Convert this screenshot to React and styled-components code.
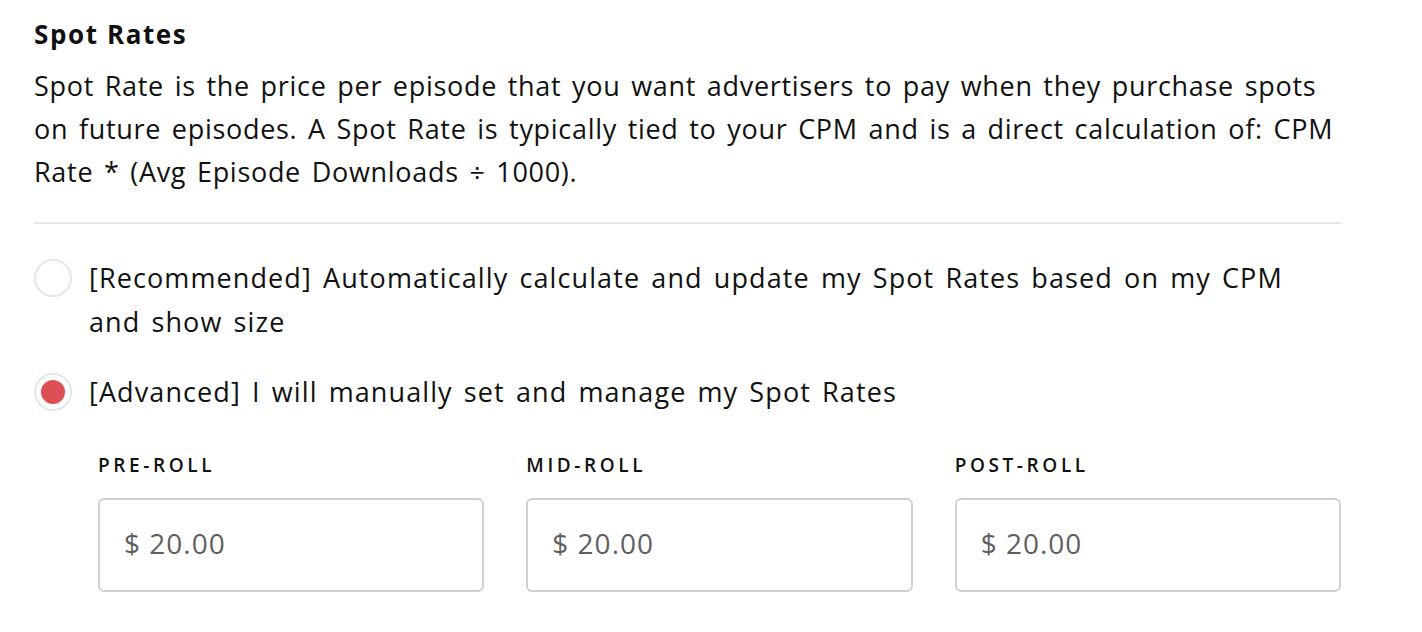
import React, { useState } from "react";
import styled, { createGlobalStyle } from "styled-components";

const GlobalStyle = createGlobalStyle`
  body {
    margin: 0;
    background: #ffffff;
    font-family: "Open Sans", "Liberation Sans", sans-serif;
    color: #111111;
  }
`

const Page = styled.div`
  padding: 16px 0 0 34px;
  width: 1307px;
`

const Title = styled.h2`
  margin: 0;
  font-size: 26px;
  font-weight: 700;
  line-height: 36px;
  letter-spacing: 1.6px;
`

const Description = styled.p`
  margin: 12px 0 0;
  font-size: 27px;
  line-height: 43px;
  font-weight: 400;
  letter-spacing: 0.7px;
  word-spacing: 3px;
  white-space: nowrap;
`

const Divider = styled.hr`
  border: none;
  border-top: 2px solid #e6e6e6;
  margin: 29px 0 0;
`

const Options = styled.div`
  display: flex;
  flex-direction: column;
  gap: 26px;
  margin-top: 32px;
`

const OptionRow = styled.label`
  display: flex;
  align-items: flex-start;
  gap: 17px;
  cursor: pointer;
`

const Radio = styled.span`
  flex-shrink: 0;
  width: 38px;
  height: 38px;
  border-radius: 50%;
  border: 2px solid #e6e6e6;
  box-sizing: border-box;
  display: flex;
  align-items: center;
  justify-content: center;
  margin-top: 3px;

  &::after {
    content: "";
    width: 24px;
    height: 24px;
    border-radius: 50%;
    background: ${p => (p.$checked ? "#dd4f55" : "transparent")};
  }
`

const OptionText = styled.span`
  font-size: 27px;
  line-height: 44px;
  letter-spacing: 1.1px;
  word-spacing: 3px;
  white-space: nowrap;
`

const Rates = styled.div`
  display: grid;
  grid-template-columns: repeat(3, 1fr);
  column-gap: 42px;
  margin: 40px 0 0 64px;
`

const Field = styled.div`
  display: flex;
  flex-direction: column;
  gap: 22px;
`

const FieldLabel = styled.span`
  font-size: 19px;
  font-weight: 600;
  letter-spacing: 3.6px;
  line-height: 22px;
`

const Input = styled.input`
  box-sizing: border-box;
  width: 100%;
  height: 94px;
  border: 2px solid #d0d0d0;
  border-radius: 6px;
  padding: 0 24px 4px;
  font-family: inherit;
  font-size: 28px;
  letter-spacing: 1px;
  color: #5f5f5f;
  outline: none;
`

const rates = ["PRE-ROLL", "MID-ROLL", "POST-ROLL"]

function App() {
  const [mode, setMode] = useState("advanced")

  return (
    <Page>
      <GlobalStyle />
      <Title>Spot Rates</Title>
      <Description>
        Spot Rate is the price per episode that you want advertisers to pay when they purchase spots
        <br />
        on future episodes. A Spot Rate is typically tied to your CPM and is a direct calculation of: CPM
        <br />
        Rate * (Avg Episode Downloads ÷ 1000).
      </Description>
      <Divider />
      <Options>
        <OptionRow onClick={() => setMode("auto")}>
          <Radio $checked={mode === "auto"} />
          <OptionText>
            [Recommended] Automatically calculate and update my Spot Rates based on my CPM
            <br />
            and show size
          </OptionText>
        </OptionRow>
        <OptionRow onClick={() => setMode("advanced")}>
          <Radio $checked={mode === "advanced"} />
          <OptionText>[Advanced] I will manually set and manage my Spot Rates</OptionText>
        </OptionRow>
      </Options>
      <Rates>
        {rates.map(r => (
          <Field key={r}>
            <FieldLabel>{r}</FieldLabel>
            <Input defaultValue="$ 20.00" />
          </Field>
        ))}
      </Rates>
    </Page>
  )
}

export default App
